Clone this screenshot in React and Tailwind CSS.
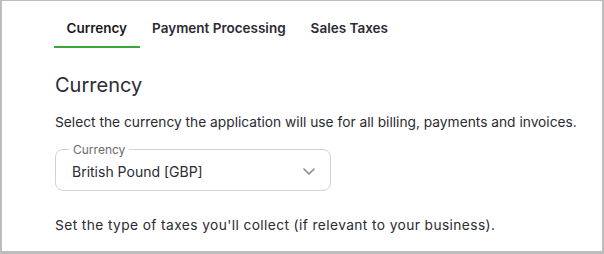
import React, { useState } from 'react';

const tabs = ['Currency', 'Payment Processing', 'Sales Taxes'];

const App = () => {
  const [active, setActive] = useState('Currency');

  return (
    <div
      className="w-[604px] h-[254px] overflow-hidden bg-white border-[#bdbdbd] border-t border-l-2 border-r-2 border-b-[3px] text-[#2b2b33]"
      style={{ fontFamily: 'Inter, "Noto Sans", sans-serif' }}
    >
      {/* Tabs */}
      <div className="flex pl-[52px] pt-[14px]">
        {tabs.map(tab => (
          <button
            key={tab}
            onClick={() => setActive(tab)}
            className={`px-[12.5px] pb-[8px] pt-[3px] text-[13.5px] font-semibold border-b-2 ${
              active === tab ? 'border-[#3aa83a] text-[#1a1a22]' : 'border-transparent text-[#2b2b33]'
            }`}
          >
            {tab}
          </button>
        ))}
      </div>

      {/* Content */}
      <div className="pl-[53px] pr-4">
        <h2 className="mt-[25px] text-[20px] leading-[24px]">Currency</h2>
        <p className="mt-[16px] text-[13.75px] leading-[18px]">
          Select the currency the application will use for all billing, payments and invoices.
        </p>

        <div className="relative mt-[18px] w-[276px] h-[42px] border border-[#d2d2d2] rounded-[8px] flex items-center pl-[16px] pr-[14px]">
          <span className="absolute -top-[6px] left-[13px] bg-white px-[4px] text-[12px] leading-[12px] text-[#6b6b6b]">
            Currency
          </span>
          <span className="flex-1 pt-[2px] text-[14px]">British Pound [GBP]</span>
          <svg width="14" height="14" viewBox="0 0 14 14" className="mt-[1px]">
            <path d="M2 5l5 5 5-5" fill="none" stroke="#8a8a8a" strokeWidth="1.6" strokeLinecap="round" strokeLinejoin="round" />
          </svg>
        </div>

        <p className="mt-[25px] text-[13.75px] leading-[18px] tracking-[0.4px]">
          Set the type of taxes you'll collect (if relevant to your business).
        </p>
        <div className="mt-[20px] h-[20px] border-t border-[#d2d2d2] rounded-t-[8px]" />
      </div>
    </div>
  );
};

export default App;
